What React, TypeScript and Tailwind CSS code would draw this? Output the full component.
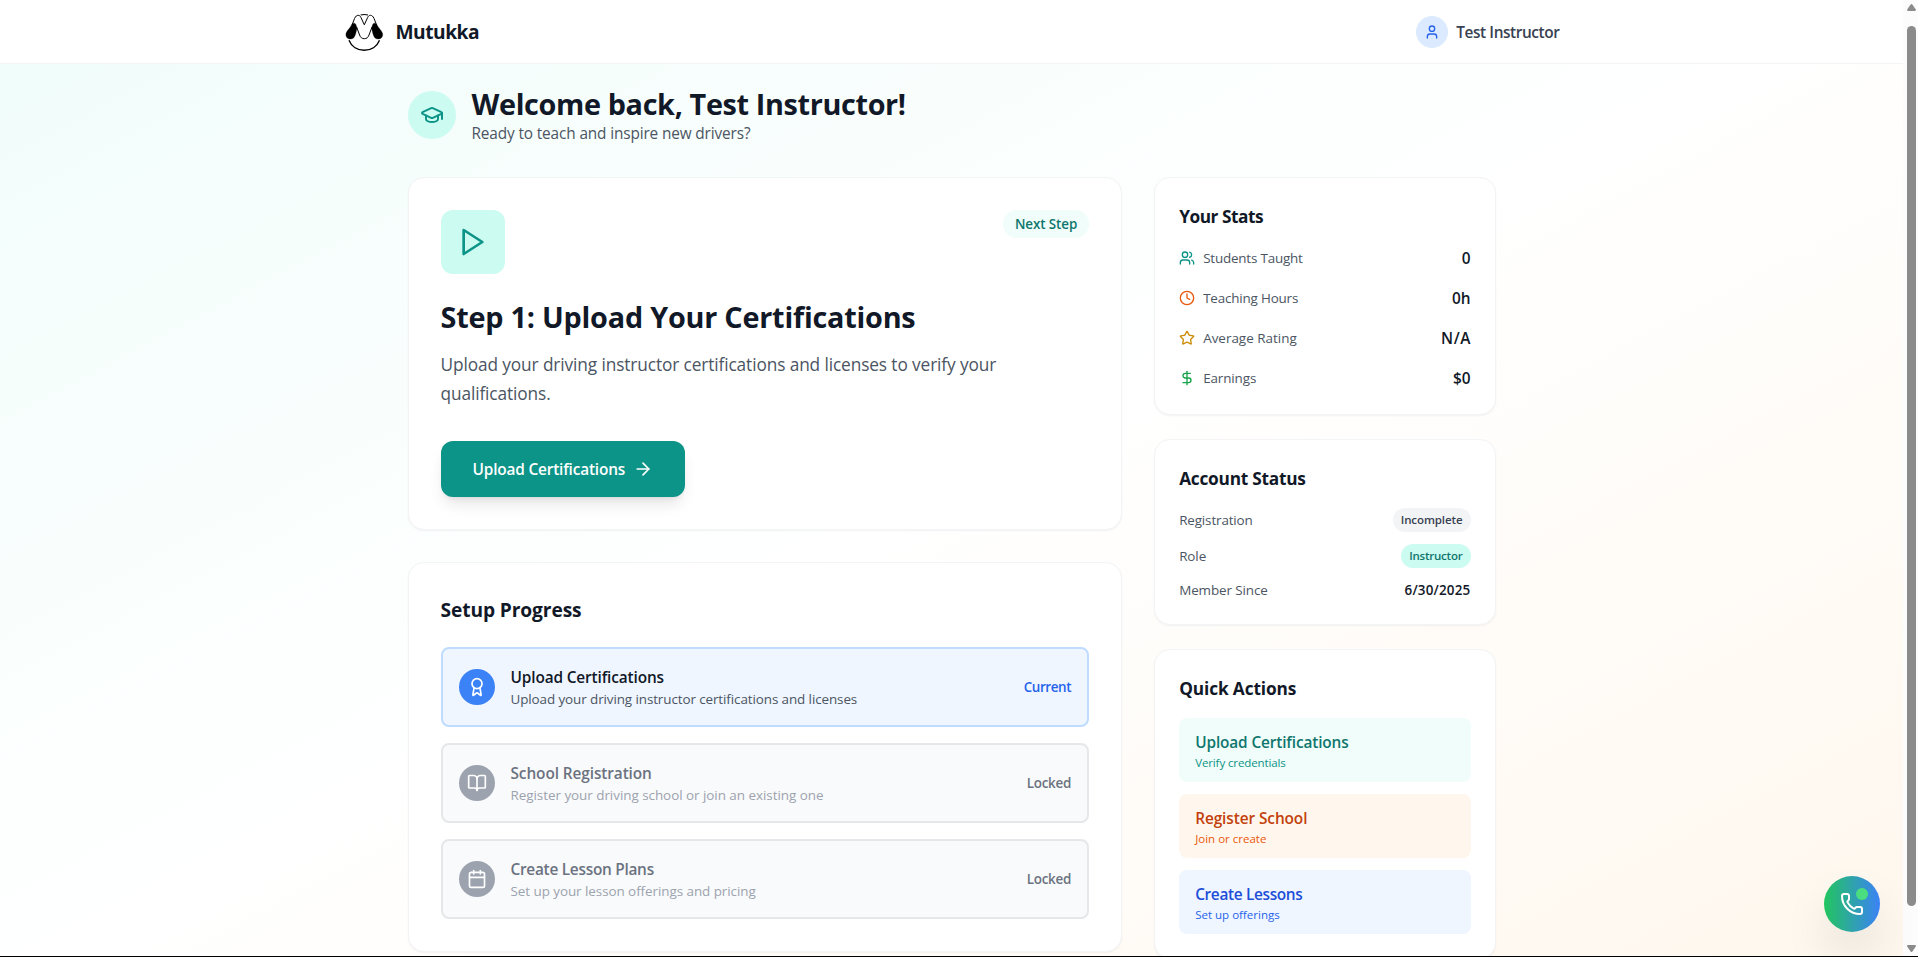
import React from "react";
import {
  ArrowRight,
  Award,
  BookOpen,
  Calendar,
  Clock,
  DollarSign,
  GraduationCap,
  Phone,
  Star,
  User,
  Users,
  type LucideIcon,
} from "lucide-react";

const cardClass = "rounded-2xl border border-[#f3f4f6] bg-white shadow-[0_1px_2px_0_rgb(0_0_0/0.05)]";

function Logo() {
  return (
    <svg viewBox="0 0 48 46" className="h-[46px] w-12" fill="none" stroke="#000">
      <path d="M12 16 L14.6 9.4 C15.6 7.2 16.8 6.3 18.2 6.3 C19.6 6.3 20.4 7.2 21 8.6 L24.3 15.8 L27.6 8.6 C28.2 7.2 29 6.3 30.4 6.3 C31.8 6.3 33 7.2 34 9.4 L36.6 16" strokeWidth="1" />
      <path d="M16.6 18 L19.6 26 C20.6 28.6 22 29.7 24.3 29.7 C26.6 29.7 28 28.6 29 26 L32 18" strokeWidth="1" />
      <path d="M20.6 6 C23 5.3 25.6 5.3 28 6" strokeWidth="1.1" />
      <path d="M12 15.2 C13.4 13.6 15.4 13.8 16 15.8 L17 19 C16.2 22.5 15.6 27 13.6 29 C10.5 31.2 5.6 29.8 5.9 25.2 C6.2 22 9.8 19.5 12 15.2Z" fill="#000" strokeWidth="0.3" />
      <path d="M36.6 15.2 C35.2 13.6 33.2 13.8 32.6 15.8 L31.6 19 C32.4 22.5 33 27 35 29 C38.1 31.2 43 29.8 42.7 25.2 C42.4 22 38.8 19.5 36.6 15.2Z" fill="#000" strokeWidth="0.3" />
      <path d="M9 31.2 C11.5 37.6 17.5 41.3 24.2 41.3 C31 41.3 37 37.6 39.5 31.2" strokeWidth="1.4" />
    </svg>
  );
}

function Header() {
  return (
    <header className="h-16 border-b border-[#f3f4f6] bg-white">
      <div className="mx-auto flex h-full max-w-7xl items-center justify-between px-8">
        <div className="flex items-center">
          <div className="-ml-1 flex h-[46px] w-12">
            <Logo />
          </div>
          <span className="ml-2 text-[19.2px] leading-7 font-bold tracking-[-0.5px] text-[#111827]">Mutukka</span>
        </div>
        <div className="flex items-center gap-2">
          <div className="flex size-8 items-center justify-center rounded-full bg-[#dbeafe]">
            <User className="size-4 text-[#2563eb]" />
          </div>
          <span className="pt-0.5 text-[15.4px] leading-6 font-semibold tracking-[-0.41px] text-[#374151]">Test Instructor</span>
        </div>
      </div>
    </header>
  );
}

function NextStep() {
  return (
    <section className={`${cardClass} p-8`}>
      <div className="mb-6 flex items-start justify-between">
        <div className="flex size-16 items-center justify-center rounded-xl bg-[#ccfbf1]">
          <svg viewBox="0 0 24 24" className="size-8 text-[#0d9488]" fill="none" stroke="currentColor" strokeWidth="2" strokeLinecap="round" strokeLinejoin="round">
            <polygon points="5 3 19 12 5 21 5 3" />
          </svg>
        </div>
        <span className="rounded-full bg-[#f0fdfa] px-3 py-1 text-[13.4px] leading-5 font-semibold tracking-[-0.09px] text-[#0f766e]">Next Step</span>
      </div>
      <h2 className="mb-[15px] pt-px text-[28.8px] leading-9 font-bold tracking-[-0.22px] text-[#111827]">Step 1: Upload Your Certifications</h2>
      <p className="mb-8 text-[17.28px] leading-[29.25px] tracking-[-0.11px] text-[#4b5563]">
        Upload your driving instructor certifications and licenses to verify your
        <br />
        qualifications.
      </p>
      <button className="flex h-14 items-center gap-2 rounded-xl bg-[#0d9488] px-8 text-[15.4px] leading-6 font-semibold tracking-[-0.18px] text-white shadow-lg">
        <span className="pt-0.5">Upload Certifications</span>
        <ArrowRight className="size-5" />
      </button>
    </section>
  );
}

type Step = {
  icon: LucideIcon;
  title: string;
  titleClass: string;
  text: string;
  textClass: string;
  current?: boolean;
};

const steps: Step[] = [
  { icon: Award, title: "Upload Certifications", titleClass: "tracking-[-0.14px]", text: "Upload your driving instructor certifications and licenses", textClass: "tracking-[-0.1px]", current: true },
  { icon: BookOpen, title: "School Registration", titleClass: "tracking-[-0.1px]", text: "Register your driving school or join an existing one", textClass: "tracking-[-0.04px]" },
  { icon: Calendar, title: "Create Lesson Plans", titleClass: "tracking-[-0.27px]", text: "Set up your lesson offerings and pricing", textClass: "tracking-[-0.06px]" },
];

function StepRow({ step }: { step: Step }) {
  const Icon = step.icon;
  const on = step.current;
  return (
    <div className={`flex items-center gap-4 rounded-lg border-2 p-4 ${on ? "border-[#bfdbfe] bg-[#eff6ff]" : "border-[#e5e7eb] bg-[#f9fafb]"}`}>
      <div className={`flex size-9 items-center justify-center rounded-full text-white ${on ? "bg-[#3b82f6]" : "bg-[#9ca3af]"}`}>
        <Icon className="size-5" />
      </div>
      <div className="flex-1">
        <h4 className={`-mb-px pt-px text-[15.4px] leading-6 font-semibold ${step.titleClass} ${on ? "text-[#111827]" : "text-[#6b7280]"}`}>{step.title}</h4>
        <p className={`text-[13.44px] leading-5 ${step.textClass} ${on ? "text-[#4b5563]" : "text-[#9ca3af]"}`}>{step.text}</p>
      </div>
      {on ? (
        <span className="text-[13.44px] leading-5 font-semibold tracking-[-0.39px] text-[#2563eb]">Current</span>
      ) : (
        <span className="text-[13.44px] leading-5 font-semibold tracking-[-0.25px] text-[#6b7280]">Locked</span>
      )}
    </div>
  );
}

const stats = [
  { icon: Users, color: "text-[#0d9488]", label: "Students Taught", labelClass: "tracking-[-0.2px]", value: "0", valueClass: "" },
  { icon: Clock, color: "text-[#ea580c]", label: "Teaching Hours", labelClass: "tracking-[-0.19px]", value: "0h", valueClass: "" },
  { icon: Star, color: "text-[#ca8a04]", label: "Average Rating", labelClass: "", value: "N/A", valueClass: "tracking-[0.6px] -mr-[0.6px]" },
  { icon: DollarSign, color: "text-[#16a34a]", label: "Earnings", labelClass: "tracking-[-0.12px]", value: "$0", valueClass: "" },
];

function Stats() {
  return (
    <section className={`${cardClass} p-6`}>
      <h3 className="mb-[15px] pt-px text-[17.28px] leading-7 font-bold tracking-[-0.46px] text-[#111827]">Your Stats</h3>
      <div className="flex flex-col gap-4">
        {stats.map(({ icon: Icon, ...s }) => (
          <div key={s.label} className="flex h-6 items-center justify-between">
            <div className="flex items-center gap-2">
              <Icon className={`size-4 ${s.color}`} />
              <span className={`text-[13.44px] leading-5 text-[#4b5563] ${s.labelClass}`}>{s.label}</span>
            </div>
            <span className={`pt-0.5 text-[15.4px] leading-6 font-semibold text-[#111827] ${s.valueClass}`}>{s.value}</span>
          </div>
        ))}
      </div>
    </section>
  );
}

function AccountStatus() {
  return (
    <section className={`${cardClass} p-6`}>
      <h3 className="mb-[15px] pt-px text-[17.28px] leading-7 font-bold tracking-[-0.24px] text-[#111827]">Account Status</h3>
      <div className="flex flex-col gap-3 text-[13.44px] leading-5 text-[#4b5563]">
        <div className="flex items-center justify-between">
          <span className="tracking-[-0.14px]">Registration</span>
          <span className="rounded-full bg-[#f3f4f6] px-2 py-1 text-[11.52px] leading-4 font-semibold tracking-[-0.1px] text-[#374151]">Incomplete</span>
        </div>
        <div className="flex items-center justify-between">
          <span className="tracking-[-0.08px]">Role</span>
          <span className="rounded-full bg-[#ccfbf1] px-2 py-1 text-[11.52px] leading-4 font-semibold tracking-[-0.22px] text-[#0f766e]">Instructor</span>
        </div>
        <div className="flex items-center justify-between">
          <span className="tracking-[-0.11px]">Member Since</span>
          <span className="font-semibold tracking-[0.19px] text-[#111827]">6/30/2025</span>
        </div>
      </div>
    </section>
  );
}

const actions = [
  { title: "Upload Certifications", text: "Verify credentials", box: "bg-[#f0fdfa]", titleClass: "text-[#0f766e] tracking-[-0.14px]", textClass: "text-[#0d9488] tracking-[-0.12px]" },
  { title: "Register School", text: "Join or create", box: "bg-[#fff7ed]", titleClass: "text-[#c2410c] tracking-[-0.09px]", textClass: "text-[#ea580c]" },
  { title: "Create Lessons", text: "Set up offerings", box: "bg-[#eff6ff]", titleClass: "text-[#1d4ed8] tracking-[-0.34px]", textClass: "text-[#2563eb]" },
];

function QuickActions() {
  return (
    <section className={`${cardClass} p-6`}>
      <h3 className="mb-[15px] pt-px text-[17.28px] leading-7 font-bold tracking-[-0.12px] text-[#111827]">Quick Actions</h3>
      <div className="flex flex-col gap-3">
        {actions.map((a) => (
          <button key={a.title} className={`rounded-lg px-4 pt-[13px] pb-[11px] text-left ${a.box}`}>
            <div className={`text-[15.4px] leading-6 font-semibold ${a.titleClass}`}>{a.title}</div>
            <div className={`text-[11.52px] leading-4 ${a.textClass}`}>{a.text}</div>
          </button>
        ))}
      </div>
    </section>
  );
}

function ScrollBar() {
  return (
    <div className="flex h-[956px] w-[15px] flex-col items-end justify-between bg-[#fcfcfc]">
      <svg viewBox="0 0 14 26" className="h-[26px] w-3.5" fill="#8b8b8b">
        <path d="M6.6 4.6 Q7.5 3.4 8.4 4.6 L11.8 9.6 Q12.2 11 11 11 L4 11 Q2.8 11 3.2 9.6Z" />
      </svg>
      <div className="mr-0.5 h-[880px] w-[9px] rounded-full bg-[#8b8b8b]" />
      <svg viewBox="0 0 14 50" className="h-[50px] w-3.5" fill="#8b8b8b">
        <path d="M6.6 45.4 Q7.5 46.6 8.4 45.4 L11.8 40.4 Q12.2 39 11 39 L4 39 Q2.8 39 3.2 40.4Z" />
      </svg>
    </div>
  );
}

export default function App() {
  return (
    <div className="relative h-[957px] overflow-hidden border-b border-black font-['Open_Sans','Noto_Sans',sans-serif]">
      <div className="flex h-[956px]">
        <div className="min-w-0 flex-1 overflow-hidden bg-[linear-gradient(to_bottom_right,#f0fdfa,#ffffff,#fff7ed)] bg-[length:100%_1008px] bg-[position:0_-11px] bg-no-repeat">
          <Header />
          <main className="mx-auto max-w-6xl px-8 pt-[21px]">
            <div className="mb-8 flex items-center gap-4">
              <div className="flex size-12 items-center justify-center rounded-full bg-[#ccfbf1]">
                <GraduationCap className="size-6 text-[#0d9488]" />
              </div>
              <div className="-mb-px pt-px">
                <h1 className="text-[28.8px] leading-9 font-bold tracking-[-0.35px] text-[#111827]">Welcome back, Test Instructor!</h1>
                <p className="text-[15.36px] leading-6 tracking-[-0.13px] text-[#4b5563]">Ready to teach and inspire new drivers?</p>
              </div>
            </div>
            <div className="grid grid-cols-3 items-start gap-8">
              <div className="col-span-2 flex flex-col gap-8">
                <NextStep />
                <section className={`${cardClass} p-8`}>
                  <h3 className="mb-[23px] pt-px text-[19.2px] leading-7 font-bold tracking-[-0.11px] text-[#111827]">Setup Progress</h3>
                  <div className="flex flex-col gap-4">
                    {steps.map((s) => (
                      <StepRow key={s.title} step={s} />
                    ))}
                  </div>
                </section>
              </div>
              <div className="flex flex-col gap-6">
                <Stats />
                <AccountStatus />
                <QuickActions />
              </div>
            </div>
          </main>
        </div>
        <ScrollBar />
      </div>
      <button className="absolute top-[876px] right-[38px] flex size-14 items-center justify-center rounded-full bg-[linear-gradient(to_right,#22c55e,#3b82f6)] shadow-2xl">
        <Phone className="size-6 text-white" />
        <span className="absolute top-3 right-3 size-3 rounded-full bg-[#4ade80]" />
      </button>
    </div>
  );
}
